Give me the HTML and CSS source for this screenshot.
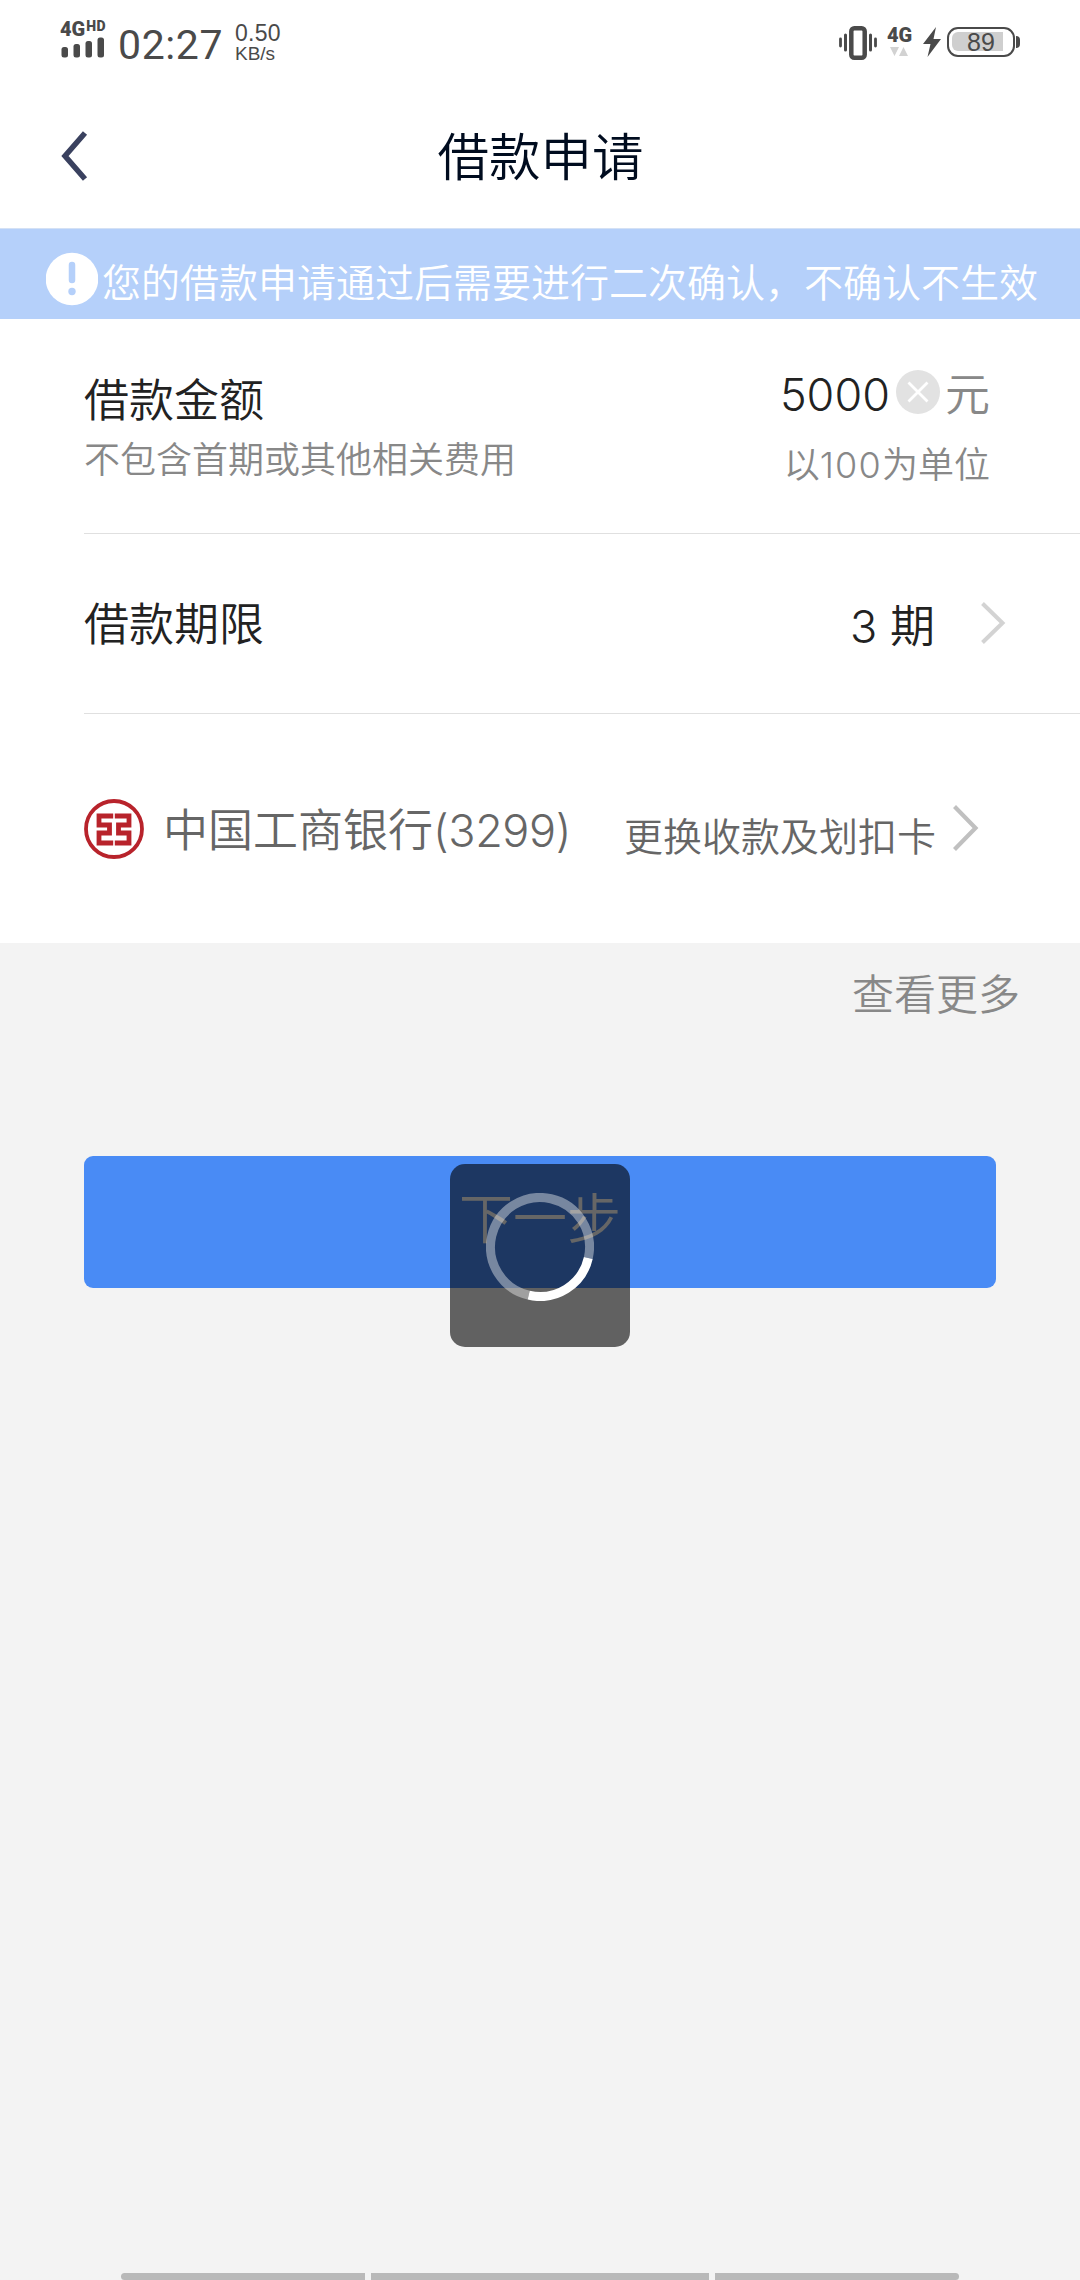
FILE: index.html
```
<!DOCTYPE html>
<html lang="zh-CN">
<head>
  <meta charset="UTF-8" />
  <title>借款申请</title>
  <link rel="stylesheet" href="styles.css">
</head>
<body>
  <div class="status">
    <div class="signal">
      <div class="net">4G<span class="hd">HD</span></div>
      <svg width="44" height="21" viewBox="0 0 44 21" fill="#4a4a4a">
        <rect x="1.5" y="10" width="6.5" height="10.5" rx="2.5"/>
        <rect x="13.5" y="7" width="6.5" height="13.5" rx="2.5"/>
        <rect x="25.5" y="4" width="6.5" height="16.5" rx="2.5"/>
        <rect x="37.5" y="0.5" width="6.5" height="20" rx="2.5"/>
      </svg>
    </div>
    <div class="clock">02:27</div>
    <div class="speed"><div class="num">0.50</div><div class="unit">KB/s</div></div>
    <div class="status-right">
      <svg class="vibrate" width="38" height="34" viewBox="0 0 38 34" fill="none" stroke="#4a4a4a">
        <rect x="12.3" y="2.3" width="13.4" height="29.4" rx="3" stroke-width="4.5"/>
        <path d="M6.5 9V24M31.5 9V24" stroke-width="3" stroke-linecap="round"/>
        <path d="M1.5 13V20M36.5 13V20" stroke-width="2.8" stroke-linecap="round"/>
      </svg>
      <div class="data">
        <div class="net">4G</div>
        <svg width="18" height="9" viewBox="0 0 18 9" fill="#d2d2d2"><path d="M0 0H9L4.5 9zM9 9H18L13.5 0z"/></svg>
      </div>
      <svg class="bolt" width="18" height="30" viewBox="0 0 18 30"><path d="M13 0L0 17H7.500L4.500 30L18 12H10.500z" fill="#4a4a4a"/></svg>
      <div class="battery"><div class="level">89</div></div>
      <div class="cap"></div>
    </div>
  </div>

  <div class="header">
    <svg class="back" width="30" height="52" viewBox="0 0 30 52"><path d="M25 3L5 26L25 49" fill="none" stroke="#3a415f" stroke-width="5.500"/></svg>
    <h1>借款申请</h1>
  </div>

  <div class="notice">
    <svg width="52" height="54" viewBox="0 0 52 54">
      <circle cx="26" cy="27" r="26.300" fill="#fff"/>
      <path d="M26 13V28" stroke="#b5d0fa" stroke-width="6.500" stroke-linecap="round"/>
      <circle cx="26" cy="39.500" r="3.700" fill="#b5d0fa"/>
    </svg>
    <span>您的借款申请通过后需要进行二次确认，不确认不生效</span>
  </div>

  <div class="card">
    <div class="row amount">
      <div class="left">
        <div class="label">借款金额</div>
        <div class="hint">不包含首期或其他相关费用</div>
      </div>
      <div class="right">
        <div class="value">
          <span class="money">5000</span>
          <svg width="44" height="44" viewBox="0 0 44 44"><circle cx="22" cy="22" r="22" fill="#e2e2e2"/><path d="M12.500 12.500L31.500 31.500M31.500 12.500L12.500 31.500" stroke="#fff" stroke-width="2.800"/></svg>
          <span class="yuan">元</span>
        </div>
        <div class="hint">以<span class="digits">100</span>为单位</div>
      </div>
    </div>
    <div class="row term">
      <div class="label">借款期限</div>
      <div class="period">3 期</div>
      <svg width="25" height="42" viewBox="0 0 25 42"><path d="M1.500 1.500L21.500 21L1.500 40.500" fill="none" stroke="#d3d3d3" stroke-width="4"/></svg>
    </div>
    <div class="row bank">
      <svg class="logo" width="60" height="60" viewBox="0 0 60 60" fill="none" stroke="#b8232b">
        <circle cx="30" cy="30" r="28" stroke-width="3.800"/>
        <path d="M29.200 17H15V26H25.500V34H15V44H29.200M30.800 17H45V26H34.500V34H45V44H30.800" stroke-width="4.800"/>
      </svg>
      <div class="name">中国工商银行<span class="tail">(3299)</span></div>
      <div class="change">更换收款及划扣卡</div>
      <svg class="arrow" width="26" height="46" viewBox="0 0 26 46"><path d="M1.500 1.500L22.500 23L1.500 44.500" fill="none" stroke="#c0c0c0" stroke-width="4.200"/></svg>
    </div>
  </div>

  <div class="more">查看更多</div>

  <div class="submit">
    <button>下一步</button>
    <div class="loading">
      <svg width="108" height="108" viewBox="0 0 108 108" fill="none" stroke="#fff" stroke-width="9">
        <path d="M42.700 102.200A49.500 49.500 0 1 1 102.300 64.900" stroke-opacity=".4"/>
        <path d="M102.300 64.900A49.500 49.500 0 0 1 42.700 102.200"/>
      </svg>
    </div>
  </div>

  <div class="nav"><i></i><i></i><i></i></div>
</body>
</html>
```

FILE: styles.css
```
* { box-sizing: border-box; }
body { margin: 0; height: 2280px; display: flex; flex-direction: column; overflow: hidden; background: #f3f3f3; color: #222; font-family: Inter, "Noto Sans CJK SC", sans-serif; font-weight: 350; white-space: nowrap; }
svg { display: block; flex: none; }

.status { display: flex; align-items: flex-start; height: 84px; padding: 20px 60px 0 60px; background: #fff; color: #4a4a4a; }
.signal { width: 48px; }
.net { height: 17px; font: 900 20px/18px Roboto, sans-serif; display: flex; }
.hd { font-size: 14px; line-height: 13px; margin-left: 1px; letter-spacing: .5px; }
.clock { margin-left: 10px; width: 106px; font-size: 41px; line-height: 50px; font-weight: 400; font-family: Roboto, sans-serif; letter-spacing: .6px; }
.speed { margin: 2px 0 0 11px; font-family: "Liberation Sans", sans-serif; font-weight: 400; }
.num { font-size: 23px; line-height: 23px; letter-spacing: .3px; }
.unit { font-size: 19px; line-height: 17px; }
.status-right { margin-left: auto; display: flex; padding-top: 6px; }
.data { margin-left: 10px; width: 26px; }
.data svg { margin: 4px 0 0 3px; }
.bolt { margin: 1px 0 0 10px; }
.battery { margin: 1px 1px 0 6px; width: 68px; height: 30px; padding: 3px; border: 2.5px solid #4a4a4a; border-radius: 11px; }
.level { width: 51px; height: 19px; padding-left: 15px; background: #cfcfcf; border-radius: 6px 0 0 6px; font: 25px/21px "Liberation Sans", sans-serif; }
.cap { width: 4px; height: 12px; margin-top: 10px; border-radius: 0 4px 4px 0; background: #4a4a4a; }

.header { display: flex; align-items: center; height: 144px; padding: 0 60px 0 60px; background: #fff; }
h1 { flex: 1; margin: 0 29px 6px 0; text-align: center; color: #000c1f; font-size: 51.5px; font-weight: 350; }

.notice { display: flex; align-items: center; height: 91px; padding: 9px 0 0 46px; border-top: 1px solid #d4e1f5; background: #b5d0fa; color: #fff; font-size: 39px; }
.notice span { margin: 2px 0 0 4px; }

.card { height: 624px; background: #fff; }
.row { display: flex; margin-left: 84px; border-bottom: 1px solid #e0e0e0; }
.label { font-size: 45px; line-height: 60px; }
.hint { color: #888; font-size: 36px; line-height: 50px; }
.amount { height: 215px; padding: 42px 90px 0 0; justify-content: space-between; }
.left .label { margin: 10px 0 4px; }
.right .hint { margin-top: 18px; text-align: right; }
.digits { letter-spacing: 1.2px; }
.value { display: flex; align-items: center; height: 61px; font-size: 45px; }
.value svg { margin: 0 5px 0 6px; }
.money { padding-top: 6px; }
.yuan { color: #888; }
.term { height: 180px; padding-right: 74px; align-items: center; }
.term .label { padding-top: 3px; }
.period { margin-left: auto; font-size: 45px; }
.term svg { margin: -2px 0 0 46px; }
.bank { height: 228px; border: 0; align-items: flex-start; padding: 85px 101px 0 0; color: #666; }
.name { width: 461px; margin: 2px 0 0 19px; font-size: 45px; line-height: 60px; }
.tail { letter-spacing: -.4px; }
.change { margin-top: 8px; font-size: 39px; line-height: 60px; }
.arrow { margin: 6px 0 0 auto; }

.more { height: 213px; padding: 22px 60px 0 0; color: #888; font-size: 42px; line-height: 60px; text-align: right; }
.submit { position: relative; margin: 0 84px; height: 132px; }
button { width: 100%; height: 132px; padding: 0 0 4px; border: 0; border-radius: 9px; background: #498bf5; color: #fff; font: 350 54px/120px Inter, "Noto Sans CJK SC", sans-serif; }
.loading { position: absolute; top: 8px; left: 366px; width: 180px; height: 183px; padding: 29px 36px; border-radius: 15px; background: rgba(0, 0, 0, .6); }

.nav { display: flex; gap: 6px; margin-top: auto; padding: 0 121px; height: 7px; }
.nav i { flex: 244; background: #b9b9b9; }
.nav i:nth-child(2) { flex: 338; }
.nav i:first-child { border-radius: 4px 0 0 4px; }
.nav i:last-child { border-radius: 0 4px 4px 0; }
```
